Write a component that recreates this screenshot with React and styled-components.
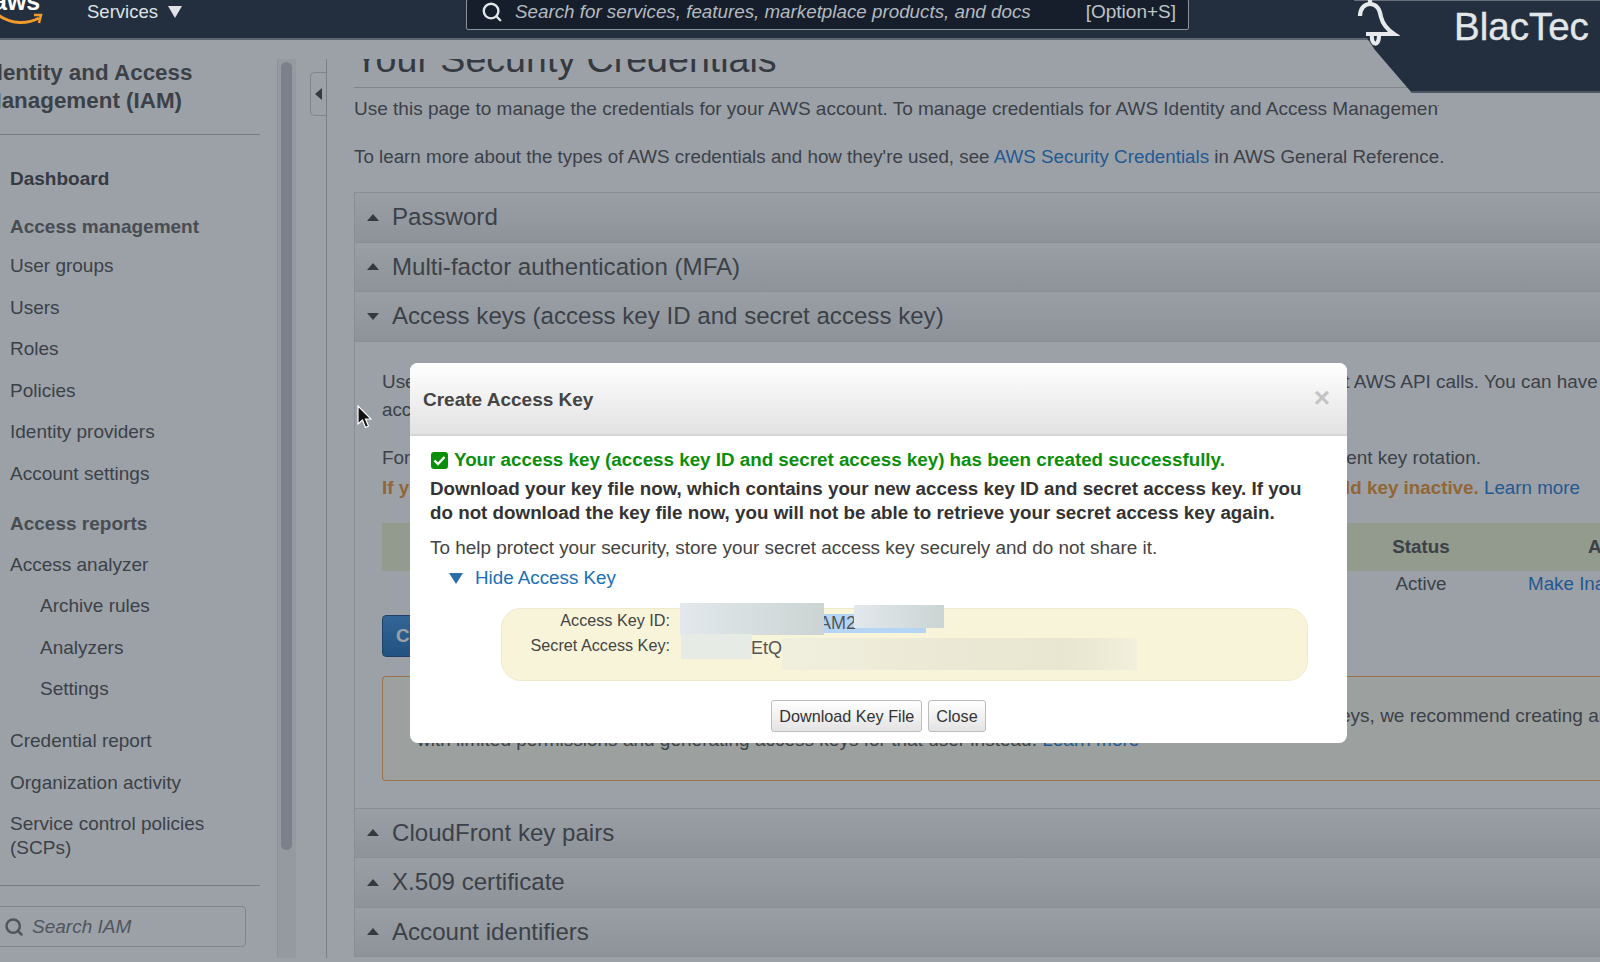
import React from "react";
import styled, { createGlobalStyle } from "styled-components";
import { Search } from "lucide-react";

const GlobalStyle = createGlobalStyle`
  html, body {
    margin: 0;
    padding: 0;
    overflow: hidden;
    background: #fff;
    font-family: "Liberation Sans", Arial, sans-serif;
  }
`;

const Page = styled.div`
  position: relative;
  width: 1600px;
  height: 962px;
  overflow: hidden;
  display: flex;
  flex-direction: column;
  color: #505050;
  font-size: 18.8px;
`;

/* top bar */
const TopBar = styled.header`
  position: relative;
  z-index: 3;
  flex: none;
  height: 38px;
  border-bottom: 2px solid #5b646f;
  background: #232f3e;
  display: flex;
  align-items: flex-start;
  color: #dfe3e6;
`;

const LogoBox = styled.svg`
  flex: none;
  width: 87px;
  height: 38px;
`;

const ServicesMenu = styled.div`
  flex: none;
  width: 379px;
  height: 24px;
  line-height: 24px;
  font-size: 18.5px;
  display: flex;
  align-items: center;
  gap: 10px;
`;

const SearchBar = styled.div`
  flex: none;
  width: 723px;
  height: 31px;
  margin-top: -1px;
  box-sizing: border-box;
  border: 1px solid #8b939c;
  border-radius: 2px;
  background: #161e2b;
  padding: 0 12px 5px 14px;
  display: flex;
  align-items: center;
  color: #b4bac0;
`;

const SearchText = styled.span`
  margin-left: 12px;
  flex: 1;
  font-style: italic;
`;

const Shortcut = styled.span`
  color: #bfc4c9;
  font-size: 19px;
`;

/* dark patch in the top right corner */
const CornerPatch = styled.div`
  position: absolute;
  z-index: 5;
  top: 0;
  right: 0;
  width: 246px;
  height: 93px;
  box-sizing: border-box;
  border-top: 1px solid #68717b;
  border-bottom: 2px solid #4c5562;
  background: #232f3e;
  clip-path: polygon(0 0, 4px 20px, 13px 38px, 21px 50px, 58px 93px, 100% 93px, 100% 0);
`;

const BellIcon = styled.svg`
  position: absolute;
  left: 0;
  top: -1px;
  width: 46px;
  height: 54px;
`;

const BrandName = styled.div`
  position: absolute;
  left: 100px;
  top: 4px;
  font-size: 38.5px;
  line-height: 44px;
  color: #e2e6e8;
  -webkit-text-stroke: 0.4px #e2e6e8;
`;

/* page under the modal */
const Body = styled.div`
  flex: 1;
  min-height: 0;
  padding: 19px 0 4px;
  display: flex;
  overflow: hidden;
`;

const Sidebar = styled.aside`
  flex: none;
  width: 277px;
  box-sizing: border-box;
  padding-left: 10px;
  overflow: hidden;
  font-size: 19px;
`;

const SideTitle = styled.div`
  margin-left: -27px;
  width: 250px;
  font-size: 22.4px;
  font-weight: 700;
  line-height: 28px;
  white-space: nowrap;
`;

const SideRule = styled.div`
  height: 1px;
  margin: ${(p) => p.$top}px 17px 0 -10px;
  background: #bbb;
`;

const NavHead = styled.div`
  margin-top: ${(p) => p.$top || 0}px;
  margin-bottom: ${(p) => p.$after || 0}px;
  height: 36px;
  line-height: 36px;
  font-weight: 700;
  color: ${(p) => (p.$strong ? "#444" : "#666")};
`;

const NavItem = styled.div`
  margin-top: ${(p) => p.$top || 0}px;
  padding-left: ${(p) => (p.$sub ? 30 : 0)}px;
  height: 41.6px;
  line-height: 41.6px;
  white-space: nowrap;
`;

const NavItemTall = styled.div`
  padding: 9px 0 9px;
  line-height: 24px;
  width: 220px;
`;

const SideSearch = styled.div`
  margin: 20px 0 0 -20px;
  width: 256px;
  height: 41px;
  box-sizing: border-box;
  border: 1px solid #ccc;
  border-radius: 4px;
  padding-left: 13px;
  display: flex;
  align-items: center;
  gap: 8px;
  color: #777;
  font-style: italic;
`;

const ScrollTrack = styled.div`
  flex: none;
  width: 19px;
  box-sizing: border-box;
  margin-right: 14px;
  padding: 3px 4px 0 3px;
  background: #f2f2f2;
  border-left: 1px solid #e4e4e4;
`;

const ScrollThumb = styled.div`
  height: 788px;
  border-radius: 6px;
  background: #c4c4c8;
`;

const CollapseHandle = styled.div`
  flex: none;
  width: 16px;
  height: 44px;
  margin-top: 13px;
  box-sizing: border-box;
  border: 1px solid #ccc;
  border-right: 0;
  border-radius: 5px 0 0 5px;
  display: flex;
  align-items: center;
  justify-content: center;
`;

const Main = styled.main`
  flex: 1;
  min-width: 0;
  border-left: 1px solid #c4c4c4;
  padding-left: 27px;
  overflow: hidden;
`;

const Heading = styled.h1`
  margin: -19px 0 0;
  height: 47px;
  border-bottom: 1px solid #ccc;
  font-size: 37.6px;
  font-weight: 400;
  line-height: 38px;
  white-space: nowrap;
  color: #444;
`;

const Intro = styled.p`
  margin: ${(p) => p.$top}px 0 0;
  width: ${(p) => p.$width || 1200}px;
  font-size: ${(p) => p.$size || 18.8}px;
  line-height: 24px;
  white-space: nowrap;
  overflow: hidden;
`;

const Link = styled.a`
  color: #1f7dd4;
  font-weight: 400;
`;

const Accordion = styled.section`
  margin: 23px -10px 0 0;
  border: 1px solid #ddd;
  border-right: 0;
  border-bottom: 0;
`;

const AccordionRow = styled.div`
  height: 49.5px;
  box-sizing: border-box;
  border-bottom: 1px solid #ddd;
  background: linear-gradient(#fbfbfb, #e6e6e6);
  padding-left: 12px;
  display: flex;
  align-items: center;
  gap: 13px;
  font-size: 24.1px;
  white-space: nowrap;
`;

const Caret = styled.span`
  width: 0;
  height: 0;
  border-left: 6.5px solid transparent;
  border-right: 6.5px solid transparent;
  ${(p) =>
    p.$open
      ? "border-top: 7px solid #444;"
      : "border-bottom: 7px solid #444;"}
`;

const Panel = styled.div`
  height: 467px;
  box-sizing: border-box;
  border-bottom: 1px solid #ddd;
  padding: 26px 0 0 27px;
`;

const PanelLine = styled.div`
  margin-top: ${(p) => p.$top || 0}px;
  font-size: ${(p) => p.$size || 18.8}px;
  line-height: ${(p) => p.$line || 28}px;
  white-space: nowrap;
`;

const Warn = styled.strong`
  color: #ec9430;
`;

const TableGrid = styled.div`
  display: grid;
  grid-template-columns: repeat(4, 200px) 210px 58px 78px 1fr;
  align-items: center;
  white-space: nowrap;
`;

const TableHead = styled(TableGrid)`
  margin-top: 20px;
  height: 48px;
  background: #eef2cf;
  font-weight: 700;
`;

const TableBody = styled(TableGrid)`
  height: 26px;
`;

const Cell = styled.div`
  text-align: ${(p) => (p.$center ? "center" : "left")};
  padding-left: ${(p) => p.$pad || 0}px;
`;

const PrimaryButton = styled.div`
  margin-top: 18px;
  width: 230px;
  height: 42px;
  box-sizing: border-box;
  border-radius: 4px;
  border: 1px solid #15528a;
  background: linear-gradient(#3f92dd, #226fb8);
  color: #fff;
  font-weight: 700;
  line-height: 40px;
  padding-left: 13px;
`;

const Notice = styled.div`
  margin-top: 19px;
  height: 105px;
  box-sizing: border-box;
  border: 1px solid #ffa85c;
  border-right: 0;
  border-radius: 4px 0 0 4px;
  background: #fffeee;
  padding: 27px 0 0 34px;
  font-size: 19px;
  line-height: 23.5px;
  white-space: nowrap;
`;

/* dimming layer */
const Backdrop = styled.div`
  position: absolute;
  z-index: 2;
  inset: 0;
  background: rgba(35, 47, 62, 0.45);
`;

const PointerIcon = styled.svg`
  position: absolute;
  z-index: 5;
  left: 357px;
  top: 405px;
  width: 15px;
  height: 24px;
`;

/* modal */
const Modal = styled.div`
  position: absolute;
  z-index: 4;
  left: 410px;
  top: 363px;
  width: 937px;
  height: 380px;
  border-radius: 8px;
  overflow: hidden;
  background: #fff;
  color: #444;
`;

const ModalHeader = styled.div`
  height: 73px;
  box-sizing: border-box;
  border-bottom: 2px solid #d6d6d6;
  background: linear-gradient(#fff, #e2e2e2);
  padding: 2px 17px 0 13px;
  display: flex;
  align-items: center;
  justify-content: space-between;
  font-size: 19px;
  font-weight: 700;
`;

const CloseMark = styled.span`
  font-size: 28px;
  margin-top: -4px;
  color: #c4c4c4;
  line-height: 1;
`;

const ModalBody = styled.div`
  padding: 12px 20px 0;
`;

const SuccessLine = styled.div`
  display: flex;
  align-items: center;
  gap: 6px;
  padding-left: 1px;
  line-height: 24px;
  font-weight: 700;
  color: #0a8f0a;
`;

const CheckBadge = styled.svg`
  flex: none;
  width: 17px;
  height: 17px;
`;

const BoldNote = styled.div`
  margin-top: 5px;
  line-height: 24px;
  font-weight: 700;
  color: #333;
`;

const PlainNote = styled.div`
  margin-top: 11px;
  font-size: 18.9px;
  line-height: 24px;
`;

const Disclosure = styled.div`
  margin: 6px 0 0 19px;
  line-height: 24px;
  display: flex;
  align-items: center;
  gap: 12px;
  color: #1a6fb8;
`;

const DisclosureArrow = styled.span`
  width: 0;
  height: 0;
  border-left: 7px solid transparent;
  border-right: 7px solid transparent;
  border-top: 11px solid #2a6ea8;
`;

const KeyPanel = styled.div`
  position: relative;
  margin: 18px 0 0 71px;
  width: 807px;
  height: 73px;
  box-sizing: border-box;
  border: 1px solid #efeacb;
  border-radius: 20px;
  background: #f8f4da;
`;

const KeyRow = styled.div`
  display: grid;
  grid-template-columns: 168px 1fr;
  height: 25px;
  line-height: 23px;
  font-size: 16.2px;
`;

const KeyLabel = styled.div`
  text-align: right;
`;

const KeyValue = styled.div`
  padding-left: ${(p) => p.$pad}px;
  padding-top: 3px;
  font-size: 18px;
  color: #555;
`;

const Selected = styled.span`
  display: inline-block;
  width: 107px;
  height: 19px;
  line-height: 19px;
  background: #b5d5f5;
`;

const Smudge = styled.div`
  position: absolute;
  left: ${(p) => p.$x}px;
  top: ${(p) => p.$y}px;
  width: ${(p) => p.$w}px;
  height: ${(p) => p.$h}px;
  background: ${(p) => p.$bg};
  filter: blur(0.6px);
`;

const ButtonRow = styled.div`
  margin-top: 19px;
  display: flex;
  justify-content: center;
  gap: 6px;
`;

const Button = styled.div`
  height: 32px;
  box-sizing: border-box;
  padding: 0 7px;
  border: 1px solid #bdbdbd;
  border-radius: 3px;
  background: linear-gradient(#fff, #e3e3e3);
  font-size: 16.2px;
  line-height: 30px;
  color: #333;
`;

const maskBlue = "linear-gradient(90deg, #e2e8ec, #cbd4d3)";

const App = () => (
  <Page>
    <GlobalStyle />
    <TopBar>
      <LogoBox viewBox="0 0 87 38">
        <text x="-7" y="10" fontFamily="Liberation Sans" fontWeight="700" fontSize="25" fill="#fff">
          aws
        </text>
        <path d="M-2 15 C12 25 28 24 39 18" fill="none" stroke="#f29a2e" strokeWidth="3" />
        <path d="M34 15 L41 15 L39 23" fill="none" stroke="#f29a2e" strokeWidth="2.5" />
      </LogoBox>
      <ServicesMenu>
        Services
        <svg width="14" height="12" viewBox="0 0 14 12">
          <path d="M0 0 H14 L7 12 Z" fill="#dfe3e6" />
        </svg>
      </ServicesMenu>
      <SearchBar>
        <Search size={22} strokeWidth={2.6} color="#e4e7ea" />
        <SearchText>Search for services, features, marketplace products, and docs</SearchText>
        <Shortcut>[Option+S]</Shortcut>
      </SearchBar>
    </TopBar>

    <Body>
      <Sidebar>
        <SideTitle>
          Identity and Access
          <br />
          Management (IAM)
        </SideTitle>
        <SideRule $top={19} />
        <NavHead $top={26} $strong>
          Dashboard
        </NavHead>
        <NavHead $top={12}>Access management</NavHead>
        <NavItem>User groups</NavItem>
        <NavItem>Users</NavItem>
        <NavItem>Roles</NavItem>
        <NavItem>Policies</NavItem>
        <NavItem>Identity providers</NavItem>
        <NavItem>Account settings</NavItem>
        <NavHead $top={11} $after={2}>
          Access reports
        </NavHead>
        <NavItem>Access analyzer</NavItem>
        <NavItem $sub>Archive rules</NavItem>
        <NavItem $sub>Analyzers</NavItem>
        <NavItem $sub>Settings</NavItem>
        <NavItem $top={10}>Credential report</NavItem>
        <NavItem>Organization activity</NavItem>
        <NavItemTall>Service control policies (SCPs)</NavItemTall>
        <SideRule $top={16} />
        <SideSearch>
          <Search size={20} strokeWidth={3} color="#777" />
          Search IAM
        </SideSearch>
      </Sidebar>
      <ScrollTrack>
        <ScrollThumb />
      </ScrollTrack>
      <CollapseHandle>
        <svg width="7" height="12" viewBox="0 0 7 12">
          <path d="M7 0 V12 L0 6 Z" fill="#444" />
        </svg>
      </CollapseHandle>
      <Main>
        <Heading>Your Security Credentials</Heading>
        <Intro $top={9} $width={1085} $size={19}>
          Use this page to manage the credentials for your AWS account. To manage credentials for AWS
          Identity and Access Management (IAM) users, use the IAM Console.
        </Intro>
        <Intro $top={24}>
          To learn more about the types of AWS credentials and how they're used, see{" "}
          <Link>AWS Security Credentials</Link> in AWS General Reference.
        </Intro>
        <Accordion>
          <AccordionRow>
            <Caret />
            Password
          </AccordionRow>
          <AccordionRow>
            <Caret />
            Multi-factor authentication (MFA)
          </AccordionRow>
          <AccordionRow>
            <Caret $open />
            Access keys (access key ID and secret access key)
          </AccordionRow>
          <Panel>
            <PanelLine $size={18.9}>
              Use access keys to make programmatic calls to AWS from the AWS CLI, Tools for PowerShell,
              AWS SDKs, or direct AWS API calls. You can have
            </PanelLine>
            <PanelLine>access keys (active or inactive) at a time.</PanelLine>
            <PanelLine $top={19} $line={29.5} $size={18.95}>
              For your protection, you should never share your secret keys with anyone. As a best
              practice, we recommend frequent key rotation.
            </PanelLine>
            <PanelLine $line={31}>
              <Warn>
                If you lose or forget your secret key, you cannot retrieve it. Instead, create a new
                access key and make the old key inactive.
              </Warn>{" "}
              <Link>Learn more</Link>
            </PanelLine>
            <TableHead>
              <Cell $pad={40}>Created</Cell>
              <Cell>Access Key ID</Cell>
              <Cell>Last Used</Cell>
              <Cell>Last Used Region</Cell>
              <Cell>Last Used Service</Cell>
              <Cell $center>Status</Cell>
              <Cell />
              <Cell $pad={60}>Actions</Cell>
            </TableHead>
            <TableBody>
              <Cell />
              <Cell />
              <Cell />
              <Cell />
              <Cell />
              <Cell $center>Active</Cell>
              <Cell />
              <Cell>
                <Link>Make Inactive</Link>
              </Cell>
            </TableBody>
            <PrimaryButton>Create New Access Key</PrimaryButton>
            <Notice>
              Root user access keys provide unrestricted access to all your account. Instead of using the
              root user access keys, we recommend creating an IAM user
              <br />
              with limited permissions and generating access keys for that user instead.{" "}
              <Link>Learn more</Link>
            </Notice>
          </Panel>
          <AccordionRow>
            <Caret />
            CloudFront key pairs
          </AccordionRow>
          <AccordionRow>
            <Caret />
            X.509 certificate
          </AccordionRow>
          <AccordionRow>
            <Caret />
            Account identifiers
          </AccordionRow>
        </Accordion>
      </Main>
    </Body>

    <Backdrop />
    <PointerIcon viewBox="0 0 15 24">
      <path d="M1 1 V19 L5.5 15 L8.5 22.5 L11.5 21 L8.5 14 H14 Z" fill="#111" stroke="#fff" strokeWidth="1.2" />
    </PointerIcon>

    <Modal>
      <ModalHeader>
        Create Access Key
        <CloseMark>×</CloseMark>
      </ModalHeader>
      <ModalBody>
        <SuccessLine>
          <CheckBadge viewBox="0 0 17 17">
            <rect width="17" height="17" rx="3" fill="#0a8f0a" />
            <path d="M3.5 8.5 L7 12 L13.5 5" fill="none" stroke="#fff" strokeWidth="2.4" />
          </CheckBadge>
          Your access key (access key ID and secret access key) has been created successfully.
        </SuccessLine>
        <BoldNote>
          Download your key file now, which contains your new access key ID and secret access key. If you
          do not download the key file now, you will not be able to retrieve your secret access key again.
        </BoldNote>
        <PlainNote>
          To help protect your security, store your secret access key securely and do not share it.
        </PlainNote>
        <Disclosure>
          <DisclosureArrow />
          Hide Access Key
        </Disclosure>
        <KeyPanel>
          <KeyRow>
            <KeyLabel>Access Key ID:</KeyLabel>
            <KeyValue $pad={149}>
              <Selected>AM2</Selected>
            </KeyValue>
          </KeyRow>
          <KeyRow>
            <KeyLabel>Secret Access Key:</KeyLabel>
            <KeyValue $pad={81}>EtQ</KeyValue>
          </KeyRow>
          <Smudge $x={178} $y={-6} $w={144} $h={32} $bg={maskBlue} />
          <Smudge $x={352} $y={-4} $w={90} $h={23} $bg={maskBlue} />
          <Smudge $x={179} $y={25} $w={71} $h={25} $bg="#e6ebe6" />
          <Smudge $x={280} $y={29} $w={355} $h={32} $bg="linear-gradient(90deg, #f0eedd, #e8e6d0 80%, #f2efdc)" />
        </KeyPanel>
        <ButtonRow>
          <Button>Download Key File</Button>
          <Button>Close</Button>
        </ButtonRow>
      </ModalBody>
    </Modal>

    <CornerPatch>
      <BellIcon viewBox="0 0 46 54">
        <path
          d="M16 0 V4 M16 4 C10 4 6 9 6 16 M16 4 C23 4 26 10 27 17 C29 25 34 30 40 34 H12 M18 36 C17 45 25 47 25 36"
          fill="none"
          stroke="#e6eaec"
          strokeWidth="4.2"
        />
      </BellIcon>
      <BrandName>BlacTec</BrandName>
    </CornerPatch>
  </Page>
);

export default App;
